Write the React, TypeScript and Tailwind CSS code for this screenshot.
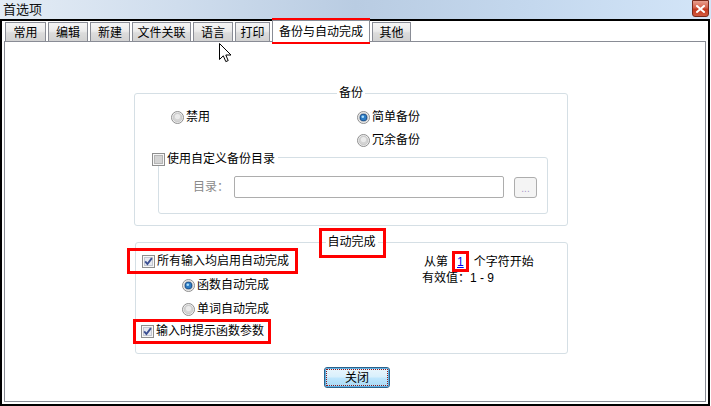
import React from "react";

function Radio({ checked = false }: { checked?: boolean }) {
  return (
    <svg width="13" height="13" viewBox="0 0 13 13" className="block shrink-0">
      <circle cx="6.5" cy="6.5" r="6" fill="#f2f2f2" stroke="#8e8e8e" strokeWidth="1" />
      <circle cx="6.5" cy="6.5" r="4.4" fill="#d4d4d4" stroke="#c4c4c4" strokeWidth="0.8" />
      <circle cx="6.5" cy="5.6" r="2.6" fill="#ededed" opacity="0.9" />
      {checked && (
        <>
          <circle cx="6.5" cy="6.5" r="3.8" fill="#1b4f8a" />
          <circle cx="6.5" cy="6.5" r="2.9" fill="#2d7cc4" />
          <circle cx="5.8" cy="5.7" r="1.3" fill="#a9defc" />
        </>
      )}
    </svg>
  );
}

function Check({ checked = false }: { checked?: boolean }) {
  return (
    <svg width="13" height="13" viewBox="0 0 13 13" className="block shrink-0">
      <rect x="0.5" y="0.5" width="12" height="12" fill="#f7f7f7" stroke="#8e8e8e" />
      <rect
        x="2.5"
        y="2.5"
        width="8"
        height="8"
        fill={checked ? "#e6e9f0" : "#d3d3d3"}
        stroke={checked ? "#c3c7d1" : "#b5b5b5"}
      />
      {checked && (
        <path d="M3.2 6.4 L5.4 9 L9.9 3.2" fill="none" stroke="#3b4f92" strokeWidth="1.9" />
      )}
    </svg>
  );
}

function Tab({ label, w, selected = false }: { label: string; w: string; selected?: boolean }) {
  if (selected) {
    return (
      <div
        className={
          w +
          " relative z-10 -mb-px h-[22px] shrink-0 flex items-center justify-center border border-b-0 border-[#898c95] bg-white pt-[1px]"
        }
      >
        {label}
      </div>
    );
  }
  return (
    <div
      className={
        w +
        " h-[19px] shrink-0 flex items-center justify-center border border-b-0 border-[#898c95] bg-[linear-gradient(180deg,#f5f5f5_0%,#ebebeb_45%,#dcdcdc_55%,#d2d2d2_100%)] pt-[2px]"
      }
    >
      {label}
    </div>
  );
}

export default function App() {
  return (
    <div className="relative h-[406px] w-[711px] overflow-hidden bg-white font-['Liberation_Sans','Noto_Sans_CJK_SC',sans-serif] text-[12px] leading-[13px] text-black">
      {/* title bar */}
      <div className="flex h-[19px] items-start justify-between bg-[linear-gradient(90deg,#e4ecf5_0%,#cfdded_25%,#b9cce2_50%,#c4d8ee_75%,#d3e5f8_100%)]">
        <span className="ml-[3px] mt-[2px] text-[13px] leading-[15px] text-[#111]">首选项</span>
        <div className="mr-[2px] flex h-[17px] w-[17px] items-center justify-center rounded-b-[3px] border border-[#7a2a1c] bg-[linear-gradient(180deg,#e9a08f_0%,#d5604a_45%,#c23a20_55%,#d2593e_100%)]">
          <svg width="9" height="8" viewBox="0 0 9 8">
            <path d="M1 1 L8 7 M8 1 L1 7" stroke="#ffffff" strokeWidth="2" strokeLinecap="square" />
          </svg>
        </div>
      </div>

      {/* window frame */}
      <div className="flex h-[387px] w-[710px] flex-col border-2 border-black px-[2px] pt-px">
        {/* tabs */}
        <div className="flex h-[19px] items-end gap-[2px] pl-px">
          <Tab label="常用" w="w-[41px]" />
          <Tab label="编辑" w="w-[40px]" />
          <Tab label="新建" w="w-[40px]" />
          <Tab label="文件关联" w="w-[59px]" />
          <Tab label="语言" w="w-[40px]" />
          <Tab label="打印" w="w-[35px]" />
          <Tab label="备份与自动完成" w="w-[98px]" selected />
          <Tab label="其他" w="w-[39px]" />
        </div>

        {/* tab panel */}
        <div className="flex h-[361px] flex-col items-start border border-[#898c95] bg-white">
          {/* group: 备份 */}
          <div className="relative ml-[129px] mt-[51px] h-[133px] w-[434px] rounded-[3px] border border-[#d5dfe5]">
            <span className="absolute left-1/2 top-[-7px] -translate-x-1/2 bg-white px-[2px]">备份</span>
            <div className="flex pl-[36px] pt-[17px]">
              <div className="flex h-[13px] w-[186px] items-center">
                <Radio />
                <span className="ml-[2px]">禁用</span>
              </div>
              <div className="flex h-[13px] items-center">
                <Radio checked />
                <span className="ml-[2px]">简单备份</span>
              </div>
            </div>
            <div className="mt-[10px] flex h-[13px] items-center pl-[222px]">
              <Radio />
              <span className="ml-[2px]">冗余备份</span>
            </div>
            {/* inner group */}
            <div className="relative ml-[23px] mt-[10px] h-[57px] w-[390px] rounded-[3px] border border-[#d5dfe5]">
              <div className="absolute left-[-7px] top-[-5px] flex h-[13px] items-center bg-white pr-[3px]">
                <Check />
                <span className="ml-[2px]">使用自定义备份目录</span>
              </div>
              <div className="flex items-center pl-[34px] pt-[18px]">
                <span className="w-[41px] text-[#8a8a8a]">目录：</span>
                <div className="h-[22px] w-[270px] rounded-[2px] border border-[#adadad] bg-white" />
                <div className="ml-[10px] flex h-[21px] w-[23px] items-end justify-center rounded-[3px] border border-[#adadad] bg-[#f4f4f4] pb-[3px] text-[10px] leading-[10px] text-[#a596c8]">
                  ...
                </div>
              </div>
            </div>
          </div>

          {/* group: 自动完成 */}
          <div className="relative ml-[130px] mt-[16px] flex h-[112px] w-[433px] rounded-[3px] border border-[#d5dfe5]">
            <span className="absolute left-1/2 top-[-7px] -translate-x-1/2 bg-white px-[2px]">自动完成</span>
            <div className="flex w-[286px] flex-col pt-[12px]">
              <div className="flex h-[13px] items-center pl-[6px]">
                <Check checked />
                <span className="ml-[2px]">所有输入均启用自动完成</span>
              </div>
              <div className="mt-[11px] flex h-[13px] items-center pl-[46px]">
                <Radio checked />
                <span className="ml-[2px]">函数自动完成</span>
              </div>
              <div className="mt-[11px] flex h-[13px] items-center pl-[46px]">
                <Radio />
                <span className="ml-[2px]">单词自动完成</span>
              </div>
              <div className="mt-[9px] flex h-[13px] items-center pl-[5px]">
                <Check checked />
                <span className="ml-[2px]">输入时提示函数参数</span>
              </div>
            </div>
            <div className="flex flex-col pt-[12px]">
              <div className="flex h-[14px] items-center pl-[2px]">
                <span>从第</span>
                <span className="ml-[9px] text-[#0000ee] underline">1</span>
                <span className="ml-[10px]">个字符开始</span>
              </div>
              <div className="mt-[3px] flex h-[13px] items-center">
                <span>有效值：1 - 9</span>
              </div>
            </div>
          </div>

          {/* close button */}
          <div className="ml-[319px] mt-[13px] flex h-[21px] w-[66px] items-center justify-center rounded-[3px] border border-[#2c628b] bg-[linear-gradient(180deg,#eaf6fd_0%,#d9f0fc_45%,#bee6fd_55%,#a7d9f5_100%)] p-[1px] shadow-[inset_0_0_0_1px_#5fb2e6]">
            <div className="flex h-full w-full items-center justify-center border border-dotted border-[#8b1c1c] pt-[1px]">
              关闭
            </div>
          </div>
        </div>
      </div>

      {/* mouse cursor */}
      <svg className="absolute left-[219px] top-[43px]" width="13" height="20" viewBox="0 0 13 20">
        <path
          d="M0.5 0.5 L0.5 16.5 L4.3 12.8 L6.8 18.6 L9.2 17.6 L6.8 12 L12 12 Z"
          fill="#ffffff"
          stroke="#000000"
          strokeWidth="1"
          strokeLinejoin="miter"
        />
      </svg>

      {/* red annotation boxes */}
      <div className="absolute left-[272px] top-[18px] h-[26px] w-[98px] border-[3px] border-[#ff0000]" />
      <div className="absolute left-[319px] top-[228px] h-[30px] w-[67px] border-[3px] border-[#ff0000]" />
      <div className="absolute left-[127px] top-[248px] h-[26px] w-[171px] border-[3px] border-[#ff0000]" />
      <div className="absolute left-[452px] top-[251px] h-[21px] w-[17px] border-[3px] border-[#ff0000]" />
      <div className="absolute left-[133px] top-[319px] h-[25px] w-[138px] border-[3px] border-[#ff0000]" />
    </div>
  );
}
